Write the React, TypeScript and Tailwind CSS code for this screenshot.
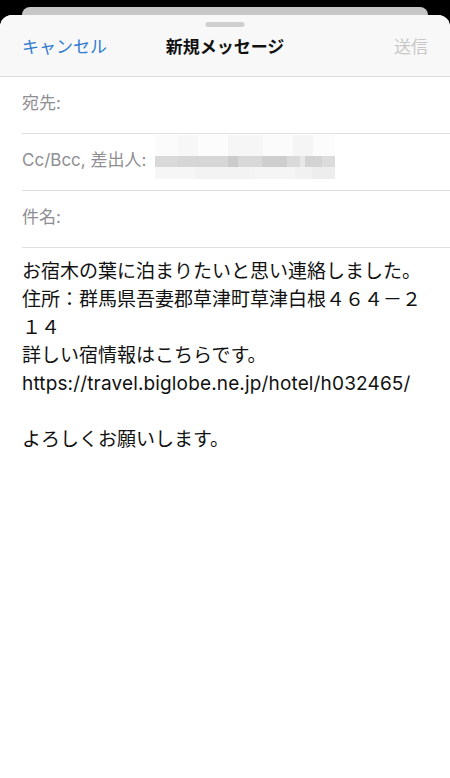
import React from 'react';

const FONT = 'Inter, "Noto Sans CJK JP", sans-serif';

// Pixelated redaction blocks covering the sender address
const redactMid = [
  { w: 23, c: '#d9d9d9' },
  { w: 50, c: '#d6d6d6' },
  { w: 10, c: '#cbcbcb' },
  { w: 24, c: '#d8d8d8' },
  { w: 25, c: '#cecece' },
  { w: 13, c: '#dadada' },
  { w: 5, c: '#e8e8e8' },
  { w: 17, c: '#d3d3d3' },
  { w: 13, c: '#dcdcdc' },
];

const redactTop = [
  { w: 23, c: '#fbfbfb' },
  { w: 20, c: '#f7f7f7' },
  { w: 30, c: '#fcfcfc' },
  { w: 35, c: '#f6f6f6' },
  { w: 30, c: '#fbfbfb' },
  { w: 20, c: '#f5f5f5' },
  { w: 22, c: '#fcfcfc' },
];

const redactBottom = [
  { w: 40, c: '#f6f6f6' },
  { w: 60, c: '#f3f3f3' },
  { w: 40, c: '#f5f5f5' },
  { w: 17, c: '#f1f1f1' },
  { w: 23, c: '#ededed' },
];

function Redacted() {
  return (
    <div className="absolute left-[133px] top-[1px] flex flex-col blur-[0.6px]">
      <div className="flex h-[21px]">
        {redactTop.map((b, i) => (
          <div key={i} style={{ width: b.w, background: b.c }} />
        ))}
      </div>
      <div className="flex h-[11px]">
        {redactMid.map((b, i) => (
          <div key={i} style={{ width: b.w, background: b.c }} />
        ))}
      </div>
      <div className="flex h-[12px]">
        {redactBottom.map((b, i) => (
          <div key={i} style={{ width: b.w, background: b.c }} />
        ))}
      </div>
    </div>
  );
}

function FieldRow({ label, children }: { label: string; children?: React.ReactNode }) {
  return (
    <div className="relative ml-[22px] flex h-[57px] items-center border-b border-[#e0e0e2] pb-[2px]">
      <span className="text-[17px] text-[#8e8e93]">{label}</span>
      {children}
    </div>
  );
}

export default function App() {
  return (
    <div className="flex min-h-[778px] flex-col bg-black pt-[7px]" style={{ fontFamily: FONT }}>
      <div className="mx-[22px] h-[8px] rounded-t-[10px] bg-[#c7c7c7]" />

      <div className="flex flex-1 flex-col overflow-hidden rounded-t-[12px] bg-white">
        {/* sheet header */}
        <div className="relative grid h-[62px] grid-cols-[1fr_auto_1fr] items-center border-b border-[#dedede] bg-[#f8f8f8] px-[22px] pt-[4px]">
          <div className="absolute left-1/2 top-[7px] h-[5px] w-[39px] -translate-x-1/2 rounded-full bg-[#cfcfcf]" />
          <span className="justify-self-start text-[17px] text-[#2f7bd0]">キャンセル</span>
          <span className="text-[17px] font-bold text-[#111]">新規メッセージ</span>
          <span className="justify-self-end text-[17px] text-[#c8c8c8]">送信</span>
        </div>

        <FieldRow label="宛先:" />
        <FieldRow label="Cc/Bcc, 差出人:">
          <Redacted />
        </FieldRow>
        <FieldRow label="件名:" />

        <div className="break-all px-[22px] pt-[10px] text-[19px] leading-[28px] text-[#111]">
          <div>お宿木の葉に泊まりたいと思い連絡しました。</div>
          <div>住所：群馬県吾妻郡草津町草津白根４６４－２１４</div>
          <div>詳しい宿情報はこちらです。</div>
          <div className="tracking-[0.15px]">https://travel.biglobe.ne.jp/hotel/h032465/</div>
          <div className="h-[28px]" />
          <div>よろしくお願いします。</div>
        </div>
      </div>
    </div>
  );
}
